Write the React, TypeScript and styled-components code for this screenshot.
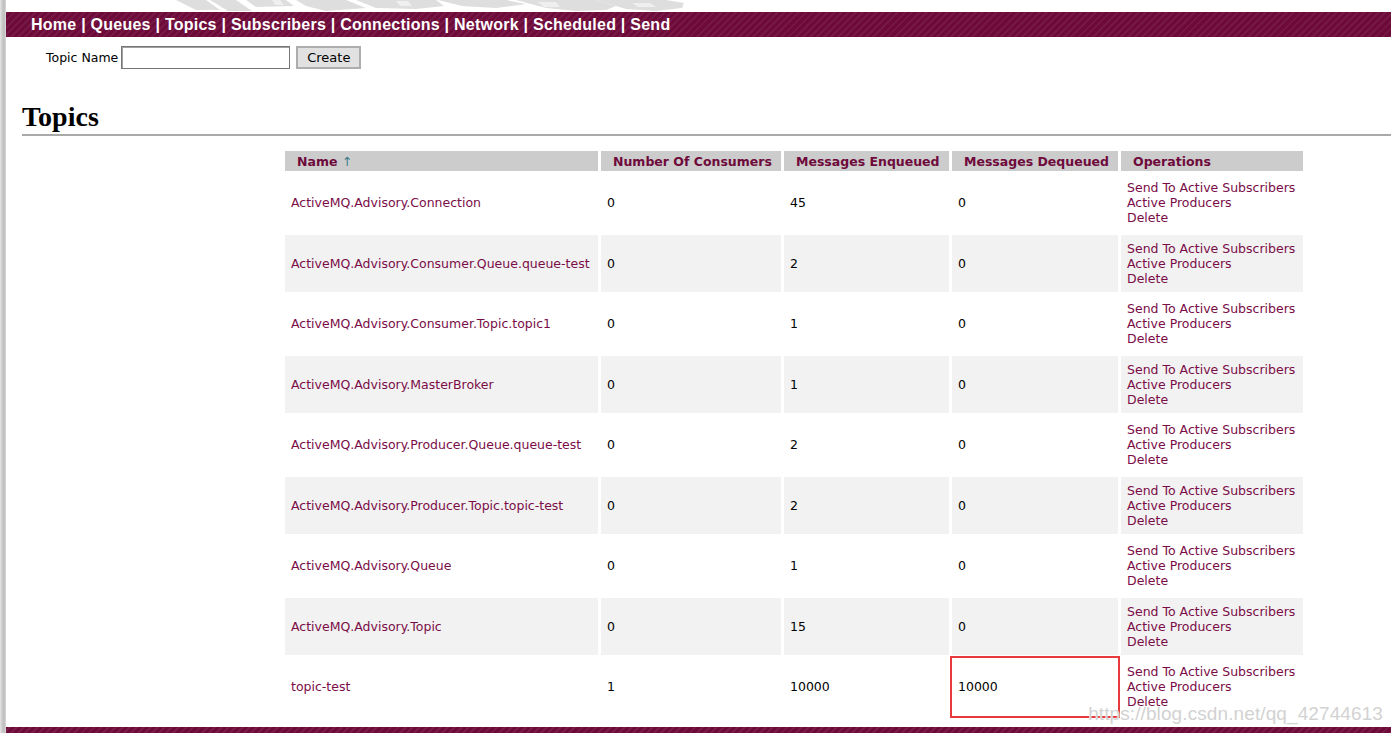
import React from "react";
import styled, { createGlobalStyle } from "styled-components";

const Global = createGlobalStyle`
  html, body { margin: 0; padding: 0; background: #fff; }
  body { font-family: "DejaVu Sans", Verdana, sans-serif; font-size: 12.5px; color: #000; overflow: hidden; }
`;

const Page = styled.div`
  position: relative;
  display: flex;
  width: 1391px;
  height: 733px;
  overflow: hidden;
`;

const LeftEdge = styled.div`
  width: 6px;
  flex: none;
  background: linear-gradient(to right, #e4e4e4 0, #c9c9c9 40%, #bdbdbd 70%, #dcdcdc 100%);
`;

const Main = styled.div`
  flex: 1;
  display: flex;
  flex-direction: column;
  min-width: 0;
`;

const LogoStrip = styled.div`
  height: 12px;
  display: flex;
  padding-left: 150px;
  overflow: hidden;
`;

const Nav = styled.nav`
  height: 25px;
  display: flex;
  align-items: center;
  padding-left: 25px;
  background-color: #6d0a39;
  background-image: repeating-linear-gradient(
    -45deg,
    rgba(255, 255, 255, 0.06) 0 2px,
    rgba(0, 0, 0, 0) 2px 5px
  );
  color: #fff;
  font-family: "Liberation Sans", Arial, sans-serif;
  font-weight: bold;
  font-size: 16px;
  letter-spacing: 0.25px;
  white-space: pre;
`;

const NavLink = styled.a`
  color: #fff;
  text-decoration: none;
`;

const Form = styled.form`
  display: flex;
  align-items: center;
  gap: 5px;
  margin: 9px 0 0 40px;
  height: 22px;
`;

const Label = styled.label`
  font-size: 12.5px;
  margin-right: -2px;
`;

const Input = styled.input`
  width: 169px;
  height: 23px;
  box-sizing: border-box;
  border: 1px solid #767676;
  box-shadow: inset 1px 1px 0 #a0a0a0;
  padding: 0 3px;
`;

const Button = styled.button`
  width: 65px;
  height: 23px;
  margin-left: 1px;
  box-sizing: border-box;
  background: #e1e1e1;
  border: 2px solid #adadad;
  font-family: "DejaVu Sans", Verdana, sans-serif;
  font-size: 13px;
  color: #000;
  padding: 0;
`;

const Title = styled.h2`
  margin: 34px 0 0 16px;
  padding-bottom: 2px;
  font-family: "Liberation Serif", "Times New Roman", serif;
  font-size: 28px;
  line-height: 30px;
  font-weight: bold;
  border-bottom: 2px solid #a9a9a9;
`;

const Table = styled.table`
  margin: 12px 0 0 276px;
  border-spacing: 3px;
  table-layout: fixed;
  width: 1024px;
`;

const Th = styled.th<{ $w: number }>`
  box-sizing: border-box;
  width: ${(p) => p.$w}px;
  height: 20px;
  padding: 0 0 0 12px;
  background: #cccccc;
  color: #6e0a3b;
  text-align: left;
  font-weight: bold;
  font-size: 12.5px;
  white-space: nowrap;
`;

const Arrow = styled.span`
  color: #3f7d8c;
  font-weight: normal;
`;

const Row = styled.tr<{ $alt: boolean }>`
  background: ${(p) => (p.$alt ? "#f2f2f2" : "#ffffff")};
`;

const Td = styled.td<{ $mark?: boolean }>`
  box-sizing: border-box;
  height: 57.5px;
  padding: 0 0 0 6px;
  vertical-align: middle;
  font-size: 12.5px;
  white-space: nowrap;
  ${(p) => (p.$mark ? "outline: 2px solid #e8393c; outline-offset: 0px;" : "")}
`;

const Link = styled.a`
  color: #7a0c47;
  text-decoration: none;
`;

const Ops = styled.div`
  display: flex;
  flex-direction: column;
  line-height: 15px;
`;

const Footer = styled.div`
  margin-top: auto;
  height: 6px;
  background-color: #6d0a39;
  background-image: repeating-linear-gradient(
    -45deg,
    rgba(255, 255, 255, 0.07) 0 2px,
    rgba(0, 0, 0, 0) 2px 5px
  );
`;

const Watermark = styled.div`
  position: absolute;
  right: 8px;
  bottom: 8px;
  font-family: "Liberation Sans", Arial, sans-serif;
  font-size: 19px;
  letter-spacing: 0.1px;
  color: #d2d2d2;
  text-shadow: 0 0 1px #fff;
  pointer-events: none;
`;

const navItems = ["Home", "Queues", "Topics", "Subscribers", "Connections", "Network", "Scheduled", "Send"];

const rows = [
  ["ActiveMQ.Advisory.Connection", "0", "45", "0"],
  ["ActiveMQ.Advisory.Consumer.Queue.queue-test", "0", "2", "0"],
  ["ActiveMQ.Advisory.Consumer.Topic.topic1", "0", "1", "0"],
  ["ActiveMQ.Advisory.MasterBroker", "0", "1", "0"],
  ["ActiveMQ.Advisory.Producer.Queue.queue-test", "0", "2", "0"],
  ["ActiveMQ.Advisory.Producer.Topic.topic-test", "0", "2", "0"],
  ["ActiveMQ.Advisory.Queue", "0", "1", "0"],
  ["ActiveMQ.Advisory.Topic", "0", "15", "0"],
  ["topic-test", "1", "10000", "10000"],
];

function LogoRemnant() {
  return (
    <svg width="540" height="12" viewBox="0 0 540 12">
      <g fill="#dedede">
        <polygon points="20,0 50,0 64,10 40,10" />
        <polygon points="54,0 80,0 96,11 72,11" />
        <polygon points="90,0 130,0 138,6 100,7" />
        <polygon points="140,0 190,0 210,8 170,11 150,6" />
        <polygon points="200,0 280,0 288,6 260,9 220,8" />
        <polygon points="282,0 350,0 370,4 340,8 306,6" />
        <polygon points="360,0 440,0 460,6 450,10 420,11 390,8" />
        <polygon points="440,0 510,0 528,3 526,8 500,11 470,9" />
      </g>
      <g fill="#efefef">
        <polygon points="116,0 124,0 128,5 119,5" />
        <polygon points="240,1 252,1 256,6 244,6" />
        <polygon points="382,2 400,2 404,7 388,7" />
        <polygon points="476,3 494,3 500,7 482,7" />
      </g>
    </svg>
  );
}

export default function App() {
  return (
    <Page>
      <Global />
      <LeftEdge />
      <Main>
        <LogoStrip>
          <LogoRemnant />
        </LogoStrip>
        <Nav>
          {navItems.map((n, i) => (
            <React.Fragment key={n}>
              <NavLink href="#">{n}</NavLink>
              {i < navItems.length - 1 ? " | " : ""}
            </React.Fragment>
          ))}
        </Nav>
        <Form onSubmit={(e) => e.preventDefault()}>
          <Label>Topic Name</Label>
          <Input type="text" />
          <Button type="submit">Create</Button>
        </Form>
        <Title>Topics</Title>
        <Table>
          <thead>
            <tr>
              <Th $w={313}>
                Name <Arrow>↑</Arrow>
              </Th>
              <Th $w={180}>Number Of Consumers</Th>
              <Th $w={165}>Messages Enqueued</Th>
              <Th $w={166}>Messages Dequeued</Th>
              <Th $w={182}>Operations</Th>
            </tr>
          </thead>
          <tbody>
            {rows.map((r, i) => (
              <Row key={r[0]} $alt={i % 2 === 1}>
                <Td>
                  <Link href="#">{r[0]}</Link>
                </Td>
                <Td>{r[1]}</Td>
                <Td>{r[2]}</Td>
                <Td $mark={i === rows.length - 1}>{r[3]}</Td>
                <Td>
                  <Ops>
                    <Link href="#">Send To Active Subscribers</Link>
                    <Link href="#">Active Producers</Link>
                    <Link href="#">Delete</Link>
                  </Ops>
                </Td>
              </Row>
            ))}
          </tbody>
        </Table>
        <Footer />
      </Main>
      <Watermark>https://blog.csdn.net/qq_42744613</Watermark>
    </Page>
  );
}
